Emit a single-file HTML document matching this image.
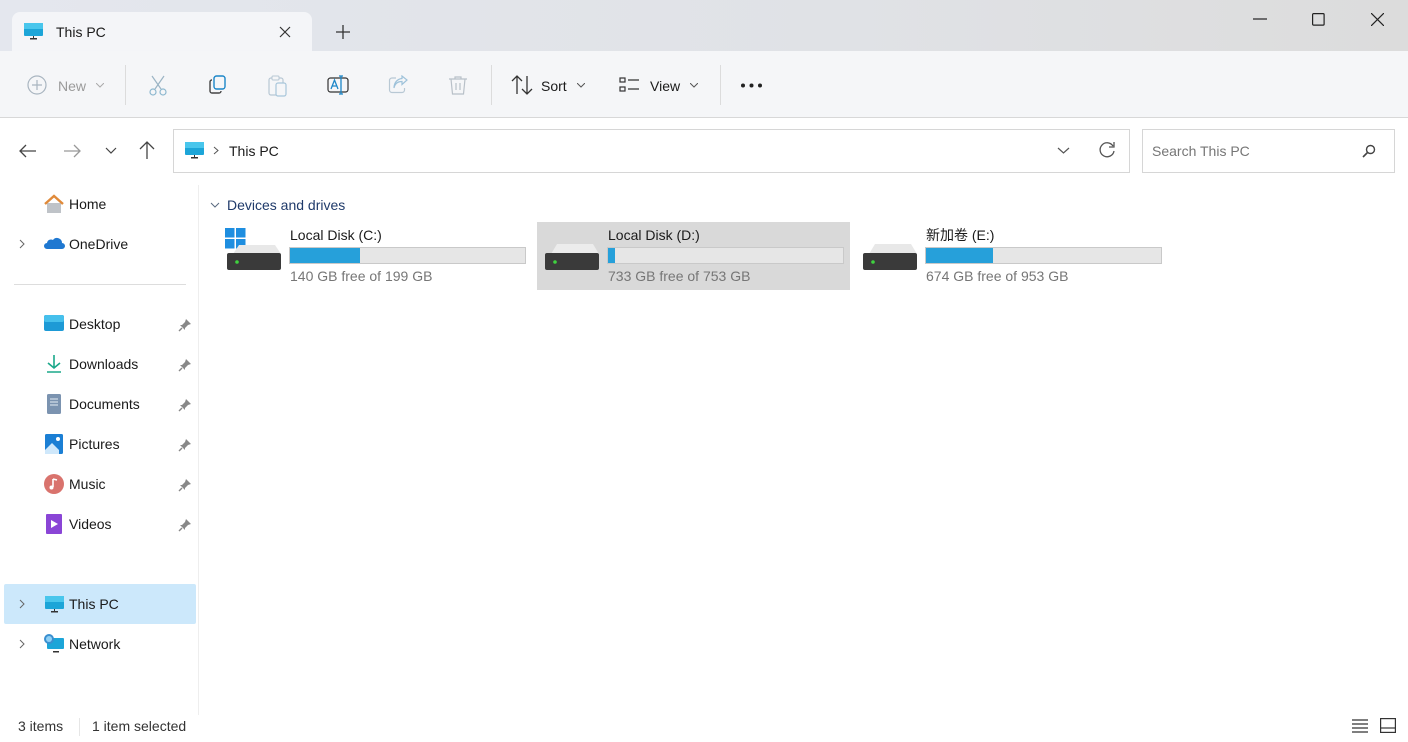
<!DOCTYPE html>
<html><head><meta charset="utf-8"><style>
*{box-sizing:border-box;margin:0;padding:0}
body{width:1408px;height:742px;overflow:hidden;background:#fff;font-family:"Segoe UI","Liberation Sans","Noto Sans CJK SC",sans-serif;font-size:14px;color:#1a1a1a;position:relative}
.abs{position:absolute}
.title{left:0;top:0;width:1408px;height:51px;background:linear-gradient(90deg,#e4e7ee,#e0e2e6 60%,#dcdcdc)}
.tab{left:12px;top:12px;width:300px;height:40px;background:#f4f5f8;border-radius:8px 8px 0 0}
.tool{left:0;top:51px;width:1408px;height:67px;background:#f5f6f8;border-bottom:1px solid #d8d8d8}
.t{position:absolute;white-space:nowrap;line-height:20px;font-size:14px}
.sep{position:absolute;width:1px;background:#dcdcdc}
.bar{position:absolute;height:17px;background:#e6e6e6;border:1px solid #c9c9c9}
.bar i{display:block;height:100%;background:#26a0da}
.gray{color:#767676}
</style></head><body>
<div class="abs title"></div>
<div class="abs tab"></div>
<svg class="abs" style="left:24px;top:23px" width="20" height="17"><rect x="0" y="0" width="19" height="13" rx="1" fill="#1ca5d8"/><rect x="0" y="0" width="19" height="6" fill="#49c6ec"/><rect x="6" y="15" width="7" height="1.5" fill="#333"/><rect x="9" y="13" width="1" height="2" fill="#333"/></svg>
<div class="t" style="left:56px;top:22px">This PC</div>
<svg class="abs" style="left:279px;top:26px" width="12" height="12"><path d="M1 1L11 11M11 1L1 11" stroke="#333" stroke-width="1.2"/></svg>
<svg class="abs" style="left:336px;top:25px" width="14" height="14"><path d="M7 0V14M0 7H14" stroke="#333" stroke-width="1.3"/></svg>
<svg class="abs" style="left:1253px;top:18px" width="14" height="2"><path d="M0 1H14" stroke="#222" stroke-width="1.2"/></svg>
<svg class="abs" style="left:1312px;top:13px" width="13" height="13"><rect x=".6" y=".6" width="11.5" height="11.5" rx="1" fill="none" stroke="#222" stroke-width="1.2"/></svg>
<svg class="abs" style="left:1371px;top:13px" width="13" height="13"><path d="M0 0L13 13M13 0L0 13" stroke="#222" stroke-width="1.2"/></svg>

<div class="abs tool"></div>
<svg class="abs" style="left:27px;top:75px" width="20" height="20"><circle cx="10" cy="10" r="9" fill="none" stroke="#a9b5c0" stroke-width="1.2"/><path d="M10 5V15M5 10H15" stroke="#a9b5c0" stroke-width="1.2"/></svg>
<div class="t" style="left:58px;top:76px;color:#9a9a9a">New</div>
<svg class="abs" style="left:96px;top:83px" width="8" height="5"><path d="M0 0L4 4L8 0" fill="none" stroke="#aaa"/></svg>
<div class="sep" style="left:125px;top:65px;height:40px"></div>
<svg class="abs" style="left:148px;top:75px" width="20" height="22"><path d="M4 1L13 14M16 1L7 14" stroke="#9bb4c4" stroke-width="1.2"/><circle cx="5" cy="17" r="3" fill="none" stroke="#8db8cf" stroke-width="1.2"/><circle cx="15" cy="17" r="3" fill="none" stroke="#8db8cf" stroke-width="1.2"/></svg>
<svg class="abs" style="left:208px;top:75px" width="20" height="20"><rect x="6" y="1" width="11" height="13" rx="2.5" fill="none" stroke="#1b86c8" stroke-width="1.4"/><path d="M4 5H3.5A2 2 0 0 0 2 7V16A2 2 0 0 0 4 18H11A2 2 0 0 0 13 16" fill="none" stroke="#444" stroke-width="1.4"/></svg>
<svg class="abs" style="left:268px;top:75px" width="20" height="22"><rect x="1" y="3" width="14" height="17" rx="2" fill="none" stroke="#b8c8d4" stroke-width="1.2"/><rect x="8" y="8" width="10" height="13" rx="2" fill="#f5f6f8" stroke="#a8c6da" stroke-width="1.2"/><rect x="4" y="1" width="7" height="4" rx="1" fill="#f5f6f8" stroke="#b8c8d4"/></svg>
<svg class="abs" style="left:327px;top:75px" width="22" height="20"><rect x="1" y="3" width="20" height="14" rx="2.5" fill="none" stroke="#333" stroke-width="1.2"/><path d="M4 14L7.5 5L11 14M5.2 11H9.8" fill="none" stroke="#1b86c8" stroke-width="1.3"/><path d="M14 1V19M12 1H16M12 19H16" stroke="#1b86c8" stroke-width="1.3"/></svg>
<svg class="abs" style="left:388px;top:75px" width="20" height="20"><path d="M8 3H4A2.5 2.5 0 0 0 1.5 5.5V15A2.5 2.5 0 0 0 4 17.5H14A2.5 2.5 0 0 0 16.5 15V13" fill="none" stroke="#b8c8d4" stroke-width="1.2"/><path d="M6 13C7 8 10 6.5 14 6.5V9.5L19 5L14 1V3.5C9 4 6 8 6 13Z" fill="none" stroke="#9ec2da" stroke-width="1.2"/></svg>
<svg class="abs" style="left:448px;top:75px" width="20" height="21"><path d="M1 4H19M7 4V2H13V4M3 4L4.5 19H15.5L17 4M8 8V15M12 8V15" fill="none" stroke="#b8c0c8" stroke-width="1.2"/></svg>
<div class="sep" style="left:491px;top:65px;height:40px"></div>
<svg class="abs" style="left:511px;top:75px" width="22" height="20"><path d="M6 19V1M1 6L6 1L11 6M16 1V19M11 14L16 19L21 14" fill="none" stroke="#333" stroke-width="1.3"/></svg>
<div class="t" style="left:541px;top:76px">Sort</div>
<svg class="abs" style="left:577px;top:83px" width="8" height="5"><path d="M0 0L4 4L8 0" fill="none" stroke="#555"/></svg>
<svg class="abs" style="left:619px;top:77px" width="22" height="16"><rect x="1" y="1" width="5" height="4" fill="none" stroke="#333" stroke-width="1.2"/><rect x="1" y="10" width="5" height="4" fill="none" stroke="#333" stroke-width="1.2"/><path d="M9 3H20M9 12H20" stroke="#333" stroke-width="1.2"/></svg>
<div class="t" style="left:650px;top:76px">View</div>
<svg class="abs" style="left:690px;top:83px" width="8" height="5"><path d="M0 0L4 4L8 0" fill="none" stroke="#555"/></svg>
<div class="sep" style="left:720px;top:65px;height:40px"></div>
<svg class="abs" style="left:740px;top:83px" width="24" height="5"><circle cx="3" cy="2.5" r="2" fill="#222"/><circle cx="11.5" cy="2.5" r="2" fill="#222"/><circle cx="20" cy="2.5" r="2" fill="#222"/></svg>

<svg class="abs" style="left:19px;top:144px" width="18" height="14"><path d="M17 7H2M7 1L1 7L7 13" fill="none" stroke="#444" stroke-width="1.3"/></svg>
<svg class="abs" style="left:63px;top:144px" width="18" height="14"><path d="M1 7H16M11 1L17 7L11 13" fill="none" stroke="#999" stroke-width="1.3"/></svg>
<svg class="abs" style="left:105px;top:147px" width="12" height="7"><path d="M1 1L6 6L11 1" fill="none" stroke="#444" stroke-width="1.2"/></svg>
<svg class="abs" style="left:139px;top:141px" width="16" height="18"><path d="M8 18V2M1 8L8 1L15 8" fill="none" stroke="#444" stroke-width="1.3"/></svg>
<div class="abs" style="left:173px;top:129px;width:957px;height:44px;border:1px solid #d6d6d6"></div>
<svg class="abs" style="left:185px;top:142px" width="20" height="17"><rect x="0" y="0" width="19" height="13" rx="1" fill="#1ca5d8"/><rect x="0" y="0" width="19" height="6" fill="#49c6ec"/><rect x="6" y="15" width="7" height="1.5" fill="#333"/><rect x="9" y="13" width="1" height="2" fill="#333"/></svg>
<svg class="abs" style="left:213px;top:146px" width="6" height="9"><path d="M1 1L5 4.5L1 8" fill="none" stroke="#555"/></svg>
<div class="t" style="left:229px;top:141px">This PC</div>
<svg class="abs" style="left:1057px;top:147px" width="13" height="7"><path d="M1 1L6.5 6L12 1" fill="none" stroke="#555" stroke-width="1.2"/></svg>
<svg class="abs" style="left:1098px;top:141px" width="18" height="18"><path d="M15 5A7 7 0 1 0 16 10M16 1V6H11" fill="none" stroke="#555" stroke-width="1.3"/></svg>
<div class="abs" style="left:1142px;top:129px;width:253px;height:44px;border:1px solid #d6d6d6"></div>
<div class="t gray" style="left:1152px;top:141px">Search This PC</div>
<svg class="abs" style="left:1362px;top:144px" width="14" height="14"><circle cx="8.5" cy="5.5" r="4" fill="none" stroke="#444" stroke-width="1.4"/><path d="M5.5 8.5L1 13" stroke="#444" stroke-width="1.6"/></svg>

<!-- sidebar -->
<div class="sep" style="left:198px;top:185px;height:530px;background:#eee"></div>
<svg class="abs" style="left:44px;top:194px" width="20" height="20"><path d="M3 9V19H17V9" fill="#bfc3c8"/><path d="M1 10L10 2L19 10" fill="none" stroke="#e08a3a" stroke-width="2.4"/></svg>
<div class="t" style="left:69px;top:194px">Home</div>
<svg class="abs" style="left:19px;top:239px" width="6" height="10"><path d="M1 1L5 5L1 9" fill="none" stroke="#666"/></svg>
<svg class="abs" style="left:43px;top:236px" width="22" height="14"><path d="M4 13H19A3 3 0 0 0 19 7A5 5 0 0 0 10 4A4 4 0 0 0 4 7A3 3 0 0 0 4 13Z" fill="#1f78d1"/></svg>
<div class="t" style="left:69px;top:234px">OneDrive</div>
<div class="abs" style="left:14px;top:284px;width:172px;height:1px;background:#ddd"></div>
<svg class="abs" style="left:44px;top:315px" width="20" height="18"><rect x="0" y="0" width="20" height="16" rx="2" fill="#1d9ad6"/><rect x="0" y="0" width="20" height="7" rx="2" fill="#46c0ec"/></svg>
<div class="t" style="left:69px;top:314px">Desktop</div>
<svg class="abs" style="left:46px;top:354px" width="16" height="20"><path d="M8 1V14M2 9L8 14L14 9M1 18H15" fill="none" stroke="#1ba88a" stroke-width="1.6"/></svg>
<div class="t" style="left:69px;top:354px">Downloads</div>
<svg class="abs" style="left:47px;top:394px" width="14" height="20"><rect x="0" y="0" width="14" height="20" rx="1.5" fill="#7b93b0"/><path d="M3 5H11M3 8H11M3 11H11" stroke="#e6edf5" stroke-width="1"/></svg>
<div class="t" style="left:69px;top:394px">Documents</div>
<svg class="abs" style="left:45px;top:434px" width="18" height="20"><rect width="18" height="20" rx="1.5" fill="#1b7fd4"/><path d="M0 16L7 9L14 16V20H0Z" fill="#cfe8fb"/><circle cx="13" cy="5" r="2" fill="#fff"/></svg>
<div class="t" style="left:69px;top:434px">Pictures</div>
<svg class="abs" style="left:44px;top:474px" width="20" height="20"><circle cx="10" cy="10" r="10" fill="#d9736d"/><path d="M9 5V13M9 5L13 6" stroke="#fff" stroke-width="1.6"/><circle cx="7.5" cy="13.5" r="2" fill="#fff"/></svg>
<div class="t" style="left:69px;top:474px">Music</div>
<svg class="abs" style="left:46px;top:514px" width="16" height="20"><rect width="16" height="20" rx="1" fill="#8a45d6"/><path d="M5 6V14L12 10Z" fill="#fff"/></svg>
<div class="t" style="left:69px;top:514px">Videos</div>
<svg class="abs" style="left:178px;top:318px" width="14" height="220"><g fill="#888"><path d="M8 1L13 6L10 7L7 10L7 12L2 7L4 7L7 4Z"/><path transform="translate(0,40)" d="M8 1L13 6L10 7L7 10L7 12L2 7L4 7L7 4Z"/><path transform="translate(0,80)" d="M8 1L13 6L10 7L7 10L7 12L2 7L4 7L7 4Z"/><path transform="translate(0,120)" d="M8 1L13 6L10 7L7 10L7 12L2 7L4 7L7 4Z"/><path transform="translate(0,160)" d="M8 1L13 6L10 7L7 10L7 12L2 7L4 7L7 4Z"/><path transform="translate(0,200)" d="M8 1L13 6L10 7L7 10L7 12L2 7L4 7L7 4Z"/></g><g stroke="#888" stroke-width="1.4"><path d="M4 10L1 13"/><path d="M4 50L1 53"/><path d="M4 90L1 93"/><path d="M4 130L1 133"/><path d="M4 170L1 173"/><path d="M4 210L1 213"/></g></svg>
<div class="abs" style="left:4px;top:584px;width:192px;height:40px;background:#cce8fb;border-radius:2px"></div>
<svg class="abs" style="left:19px;top:599px" width="6" height="10"><path d="M1 1L5 5L1 9" fill="none" stroke="#666"/></svg>
<svg class="abs" style="left:45px;top:596px" width="20" height="17"><rect x="0" y="0" width="19" height="13" rx="1" fill="#1ca5d8"/><rect x="0" y="0" width="19" height="6" fill="#49c6ec"/><rect x="6" y="15" width="7" height="1.5" fill="#333"/><rect x="9" y="13" width="1" height="2" fill="#333"/></svg>
<div class="t" style="left:69px;top:594px">This PC</div>
<svg class="abs" style="left:19px;top:639px" width="6" height="10"><path d="M1 1L5 5L1 9" fill="none" stroke="#666"/></svg>
<svg class="abs" style="left:43px;top:634px" width="22" height="19"><rect x="4" y="4" width="17" height="11" rx="1" fill="#1ca5d8"/><rect x="10" y="17" width="6" height="1.5" fill="#333"/><circle cx="6" cy="5" r="5" fill="#3a8fd0"/><circle cx="6" cy="5" r="3" fill="#8fd0f5"/></svg>
<div class="t" style="left:69px;top:634px">Network</div>

<!-- content -->
<svg class="abs" style="left:210px;top:202px" width="10" height="6"><path d="M1 1L5 5L9 1" fill="none" stroke="#5a6a80"/></svg>
<div class="t" style="left:227px;top:195px;color:#1f3a6a">Devices and drives</div>

<div class="abs" style="left:537px;top:222px;width:313px;height:68px;background:#d9d9d9"></div>

<svg class="abs" style="left:225px;top:228px" width="58" height="44"><rect x="0" y="0" width="9.5" height="9.5" fill="#1e8ee0"/><rect x="11" y="0" width="9.5" height="9.5" fill="#1e8ee0"/><rect x="0" y="11" width="9.5" height="9.5" fill="#1e8ee0"/><rect x="11" y="11" width="9.5" height="9.5" fill="#1e8ee0"/><path d="M8 26L14 17H50L56 26Z" fill="#e8e8e8"/><rect x="2" y="25" width="54" height="17" rx="2" fill="#3a3a3a"/><circle cx="12" cy="34" r="1.8" fill="#3fd33f"/></svg>
<div class="t" style="left:290px;top:225px">Local Disk (C:)</div>
<div class="bar" style="left:289px;top:247px;width:237px"><i style="width:70px"></i></div>
<div class="t gray" style="left:290px;top:266px">140 GB free of 199 GB</div>

<svg class="abs" style="left:543px;top:228px" width="58" height="44"><path d="M8 26L14 16H50L56 26Z" fill="#ececec"/><rect x="2" y="25" width="54" height="17" rx="2" fill="#3a3a3a"/><circle cx="12" cy="34" r="1.8" fill="#3fd33f"/></svg>
<div class="t" style="left:608px;top:225px">Local Disk (D:)</div>
<div class="bar" style="left:607px;top:247px;width:237px"><i style="width:7px"></i></div>
<div class="t gray" style="left:608px;top:266px">733 GB free of 753 GB</div>

<svg class="abs" style="left:861px;top:228px" width="58" height="44"><path d="M8 26L14 16H50L56 26Z" fill="#e8e8e8"/><rect x="2" y="25" width="54" height="17" rx="2" fill="#3a3a3a"/><circle cx="12" cy="34" r="1.8" fill="#3fd33f"/></svg>
<div class="t" style="left:926px;top:225px">新加卷 (E:)</div>
<div class="bar" style="left:925px;top:247px;width:237px"><i style="width:67px"></i></div>
<div class="t gray" style="left:926px;top:266px">674 GB free of 953 GB</div>

<!-- status -->
<div class="t" style="left:18px;top:716px;color:#333">3 items</div>
<div class="sep" style="left:79px;top:718px;height:18px;background:#e6e6e6"></div>
<div class="t" style="left:92px;top:716px;color:#333">1 item selected</div>
<svg class="abs" style="left:1352px;top:719px" width="16" height="14"><path d="M0 1H16M0 5H16M0 9H16M0 13H16" stroke="#333" stroke-width="1.2"/></svg>
<svg class="abs" style="left:1380px;top:718px" width="16" height="15"><rect x=".6" y=".6" width="14.8" height="13.8" fill="none" stroke="#333" stroke-width="1.2"/><path d="M1 10H15" stroke="#333" stroke-width="1.2"/></svg>
</body></html>
